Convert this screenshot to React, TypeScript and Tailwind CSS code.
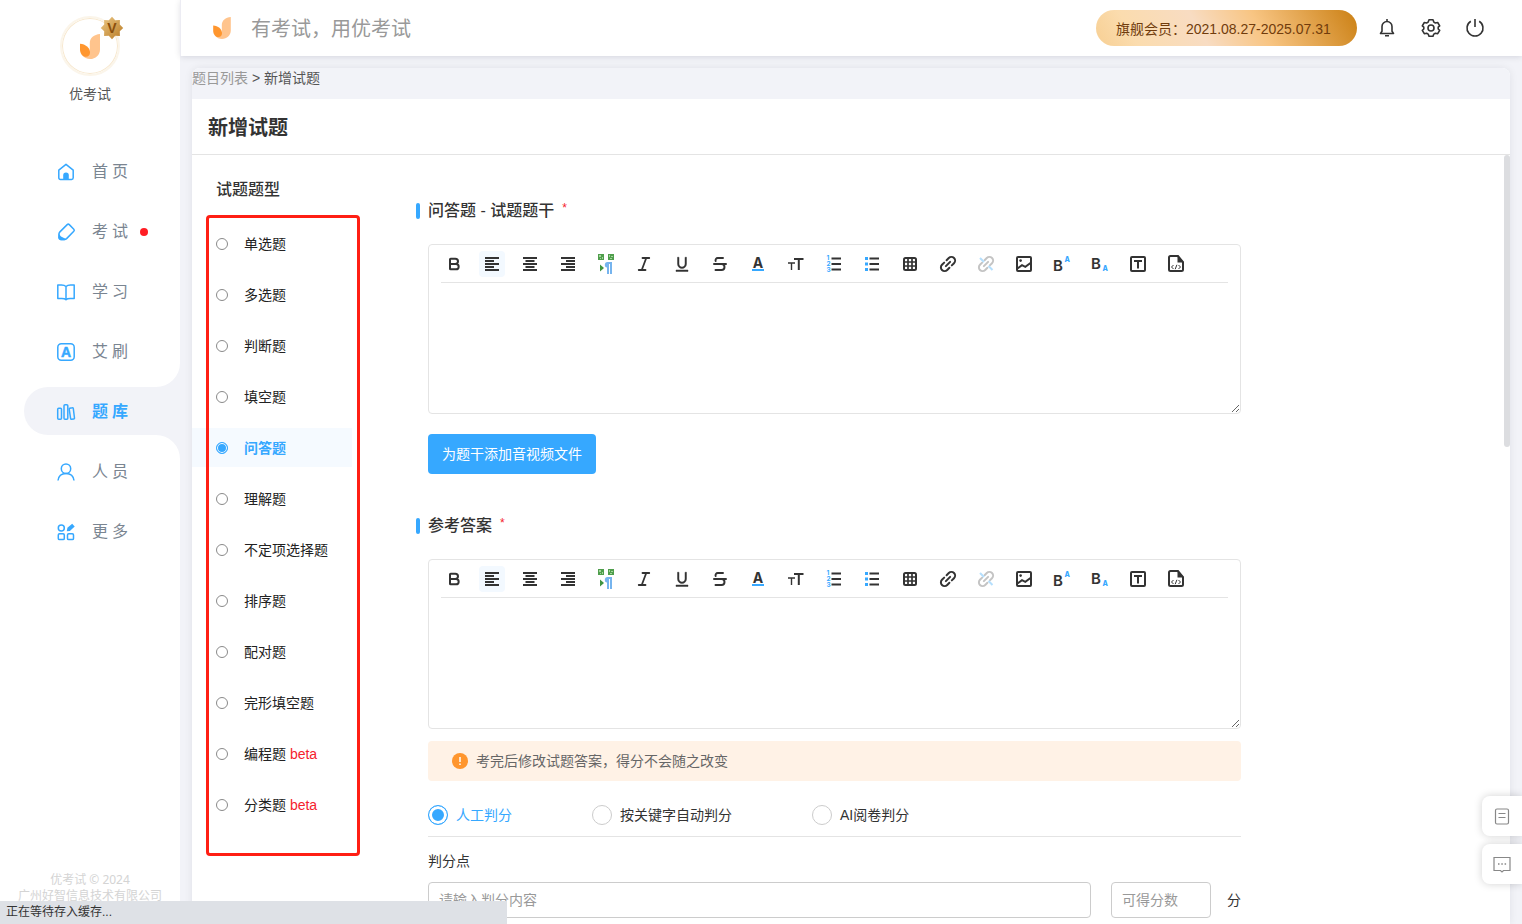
import React from 'react';
import { Bold, Italic, Strikethrough } from 'lucide-react';
import { RiUnderline } from 'react-icons/ri';

const Logo = ({ className }: { className: string }) => (
  <svg viewBox="0 0 20 25" className={className}>
    <path d="M20 0C14 .6 9.800 4 9.800 9v8L2 21c2 2.700 5 4 8 4 5.600 0 10-4.200 10-9.600z" fill="#ffc48d" />
    <path d="M0 9.800c5.500.4 10 3.800 10 8.800 0 2.500-1.500 4.200-4 4.200C2.500 22.800 0 19.500 0 15.500z" fill="#ff962e" />
  </svg>
);

const navItems = [
  {
    label: '首页',
    icon: (
      <>
        <path d="M2.800 8.200 10 2.300l7.200 5.900v7.600a1.600 1.600 0 0 1-1.600 1.600H4.400a1.600 1.600 0 0 1-1.600-1.600z" />
        <path d="M7.200 18v-4.600a2.800 2.800 0 0 1 5.600 0V18z" fill="currentColor" stroke="none" />
      </>
    ),
  },
  {
    label: '考试',
    dot: true,
    icon: (
      <>
        <path d="M11.200 2.600a1.500 1.500 0 0 1 2.100 0l4.500 4.600a1.500 1.500 0 0 1 0 2.100l-7.200 7.300a3 3 0 0 1-2 .8H5a2 2 0 0 1-2-2v-3.500a3 3 0 0 1 .9-2z" />
        <path d="M2.600 11.500 5 14.500l5 2.500-1.400 1.200H4.500L2.300 16z" fill="currentColor" stroke="none" />
      </>
    ),
  },
  {
    label: '学习',
    icon: <path d="M10 4.500C8.800 3.300 7.500 3 5.500 3H1.800v13.500h4c2 0 3.200.2 4.200 1.200 1-1 2.200-1.200 4.200-1.200h4V3h-3.700c-2 0-3.300.3-4.500 1.500zm0 0v13" />,
  },
  {
    label: '艾刷',
    icon: (
      <>
        <rect x="1.800" y="1.800" width="16.400" height="16.400" rx="3.500" />
        <text x="10" y="15" textAnchor="middle" fontSize="14" fontWeight="800" fill="currentColor" strokeWidth="0.500">A</text>
      </>
    ),
  },
  {
    label: '题库',
    active: true,
    icon: (
      <>
        <rect x="1.700" y="6.200" width="3.800" height="11" rx="1" />
        <rect x="8" y="2.700" width="3.800" height="14.500" rx="1" />
        <path d="m13.800 6.300 2.500-.5a.8.8 0 0 1 1 .7l1.200 9.500a.8.8 0 0 1-.7.9l-2.300.3a.8.8 0 0 1-.9-.7l-1.400-9.400a.8.8 0 0 1 .6-.8z" />
      </>
    ),
  },
  {
    label: '人员',
    icon: (
      <>
        <circle cx="10" cy="6.700" r="4.700" />
        <path d="M2 18.500c.5-4.400 3.700-7.100 8-7.100s7.500 2.700 8 7.100" />
      </>
    ),
  },
  {
    label: '更多',
    icon: (
      <>
        <circle cx="5.300" cy="6" r="3" />
        <rect x="2.300" y="11.800" width="6" height="5.800" rx="1.200" />
        <rect x="11.500" y="11.800" width="6" height="5.800" rx="1.200" />
        <path d="m10.800 9.200.6-3.400 4.800-4 2.500 2.800-4.800 4.300z" fill="currentColor" stroke="none" />
      </>
    ),
  },
];

const questionTypes = [
  { label: '单选题' },
  { label: '多选题' },
  { label: '判断题' },
  { label: '填空题' },
  { label: '问答题', active: true },
  { label: '理解题' },
  { label: '不定项选择题' },
  { label: '排序题' },
  { label: '配对题' },
  { label: '完形填空题' },
  { label: '编程题', beta: true },
  { label: '分类题', beta: true },
];

const gradingModes = ['人工判分', '按关键字自动判分', 'AI阅卷判分'];

const Glyph = ({ children }: { children: React.ReactNode }) => (
  <svg viewBox="0 0 20 20" className="size-5 font-['Inter',sans-serif]" fill="none" stroke="currentColor" strokeWidth="2">
    {children}
  </svg>
);

const tools = [
  { name: '加粗', icon: <Bold className="size-4" strokeWidth={3} /> },
  { name: '左对齐', active: true, icon: <Glyph><path d="M3 4h14M3 7h9M3 10h14M3 13h9M3 16h14" strokeWidth="1.800" /></Glyph> },
  { name: '居中', icon: <Glyph><path d="M3 4h14M5.500 7h9M3 10h14M5.500 13h9M3 16h14" strokeWidth="1.800" /></Glyph> },
  { name: '右对齐', icon: <Glyph><path d="M3 4h14M8 7h9M3 10h14M8 13h9M3 16h14" strokeWidth="1.800" /></Glyph> },
  {
    name: '段落方向',
    icon: (
      <Glyph>
        <g stroke="none">
          <path d="M2 0h6v6H2zM12 0h6v6h-6z" fill="#4f9e4c" />
          <path d="M3 1h2v2H3zM6 3h1v2H6zM13 1h1v2h-1zM15 2h2v1h-2zM4 4h1v1H4zM14 4h2v1h-2z" fill="#a3d49b" />
          <path d="m4 10.500 4 3.500-4 3.500z" fill="#3f9440" />
          <path d="M11.500 8H16v12h-2V10h-1v10h-2v-6.500c-3 0-3-5.500.5-5.500z" fill="#76b4ee" />
        </g>
      </Glyph>
    ),
  },
  { name: '斜体', icon: <Italic className="size-[18px]" strokeWidth={2.4} /> },
  { name: '下划线', icon: <RiUnderline className="size-[18px] stroke-[0.6] stroke-current" /> },
  { name: '删除线', icon: <Strikethrough className="size-[18px]" strokeWidth={2.6} /> },
  {
    name: '文字颜色',
    icon: (
      <Glyph>
        <text x="10" y="13.500" textAnchor="middle" fontSize="14" fontWeight="700" fill="currentColor" stroke="none">A</text>
        <path d="M4 16h12" stroke="#36a8ff" />
      </Glyph>
    ),
  },
  { name: '字号', icon: <Glyph><path d="M8 5h9.500M12.800 5v11" /><path d="M2 9h7M5.500 9v7" strokeWidth="1.400" /></Glyph> },
  {
    name: '有序列表',
    icon: (
      <Glyph>
        <path d="M7.500 4.500H17M7.500 10H17M7.500 15.500H17" />
        <g fill="#36a8ff" stroke="none" fontSize="6.500" fontWeight="700">
          <text x="2.500" y="6">1</text>
          <text x="2.500" y="12">2</text>
          <text x="2.500" y="18">3</text>
        </g>
      </Glyph>
    ),
  },
  {
    name: '无序列表',
    icon: (
      <Glyph>
        <path d="M7.500 4.500H17M7.500 10H17M7.500 15.500H17" />
        <path d="M3 3h3v3H3zM3 8.500h3v3H3zM3 14h3v3H3z" fill="#36a8ff" stroke="none" />
      </Glyph>
    ),
  },
  { name: '表格', icon: <Glyph><rect x="4" y="4" width="12" height="12" rx="1.500" /><path d="M3 8h14M3 12h14M8 3v14M12 3v14" strokeWidth="1.700" /></Glyph> },
  {
    name: '链接',
    icon: (
      <Glyph>
        <g transform="rotate(-45 10 10)" strokeLinecap="round">
          <path d="M8.300 13.700H5.200a3.700 3.700 0 0 1 0-7.400h3.100M11.700 6.300h3.100a3.700 3.700 0 0 1 0 7.400h-3.100M7 10h6" />
        </g>
      </Glyph>
    ),
  },
  {
    name: '取消链接',
    icon: (
      <Glyph>
        <g transform="rotate(-45 10 10)" stroke="#c4c4c4" strokeLinecap="round">
          <path d="M8.300 13.700H5.200a3.700 3.700 0 0 1 0-7.400h3.100M11.700 6.300h3.100a3.700 3.700 0 0 1 0 7.400h-3.100M7 10h6" />
        </g>
        <path d="m4 4 4 4M12.500 12l4 4" stroke="#b5dffd" />
      </Glyph>
    ),
  },
  {
    name: '图片',
    icon: (
      <Glyph>
        <rect x="3" y="3" width="14" height="14" rx="1" />
        <path d="m3.500 14.500 4.500-3.300 3.300 1.600 5.200-3.800" />
        <circle cx="6.600" cy="6.600" r="1.300" fill="currentColor" stroke="none" />
      </Glyph>
    ),
  },
  {
    name: '上标',
    icon: (
      <Glyph>
        <text x="1" y="16.500" fontSize="15" fontWeight="600" fill="currentColor" stroke="none">B</text>
        <text x="12.500" y="8" fontSize="7" fontWeight="800" fill="#36a8ff" stroke="none">A</text>
      </Glyph>
    ),
  },
  {
    name: '下标',
    icon: (
      <Glyph>
        <text x="1" y="14.500" fontSize="15" fontWeight="600" fill="currentColor" stroke="none">B</text>
        <text x="12.500" y="17" fontSize="7" fontWeight="800" fill="#36a8ff" stroke="none">A</text>
      </Glyph>
    ),
  },
  { name: '文本框', icon: <Glyph><rect x="3" y="3" width="14" height="14" rx="1" /><path d="M6 7h8M10 7v7.500" /></Glyph> },
  {
    name: '源代码',
    icon: (
      <Glyph>
        <path d="M12 2H4.500A1.500 1.500 0 0 0 3 3.500v12.100a1.500 1.500 0 0 0 1.500 1.500h11a1.500 1.500 0 0 0 1.500-1.500V8z" />
        <path d="M11.500 1.500 18 8.500h-6.500z" fill="currentColor" stroke="none" />
        <path d="m7.500 11-2 2 2 2M12.500 11l2 2-2 2M10.900 10.800l-1.700 4.400" strokeWidth="1" />
      </Glyph>
    ),
  },
];

const SectionTitle = ({ children }: { children: string }) => (
  <h2 className="flex items-center gap-2 text-base leading-6 font-medium text-[#333]">
    <span className="h-4 w-1 rounded-xs bg-[#36a8ff]" />
    <span className="pt-px">{children}</span>
    <span className="self-start text-xs leading-5 font-normal text-[#f5222d]">*</span>
  </h2>
);

const Editor = ({ label }: { label: string }) => (
  <div className="rounded border border-[#e4e4e4]">
    <div className="mx-3 flex h-[38px] items-center gap-3 border-b border-[#e4e4e4]">
      {tools.map((tool) => (
        <button
          key={tool.name}
          type="button"
          aria-label={tool.name}
          className={`flex size-[26px] shrink-0 items-center justify-center rounded-sm text-[#333] ${tool.active ? 'bg-[#f3f9ff]' : ''}`}
        >
          {tool.icon}
        </button>
      ))}
    </div>
    <textarea aria-label={label} className="block h-[130px] w-full resize-y px-3 py-2 text-sm outline-none" />
  </div>
);

const Sidebar = () => (
  <aside className="relative flex w-[180px] shrink-0 flex-col overflow-hidden bg-white">
    <div className="flex flex-col items-center pt-4">
      <div className="relative flex size-[60px] items-center justify-center rounded-full border-2 border-[#fbf5ea] inset-ring inset-ring-[#f7e8cf]">
        <Logo className="h-[25px] w-5" />
        <svg viewBox="0 0 24 24" className="absolute -top-0.5 -right-1.5 size-6">
          <defs>
            <linearGradient id="medal" x1="0" y1="0" x2="1" y2="1">
              <stop offset="0" stopColor="#ecc987" />
              <stop offset="1" stopColor="#b97a23" />
            </linearGradient>
          </defs>
          <path d="m12 .8 3.200 3.400 4.700-.2-.1 4.600 3.400 3.400-3.400 3.300.1 4.700-4.700-.2L12 23.200l-3.200-3.400-4.700.2.1-4.700L.8 12l3.400-3.400-.1-4.600 4.700.2z" fill="url(#medal)" />
          <text x="12" y="17" textAnchor="middle" fontSize="14" fontWeight="800" fill="#8a4f0c">V</text>
        </svg>
      </div>
      <p className="mt-2 text-sm leading-5 text-[#555]">优考试</p>
    </div>

    <nav className="mt-[43px] flex flex-col gap-3 pl-6">
      {navItems.map((item) => (
        <a
          key={item.label}
          href="#"
          className={`relative flex h-12 items-center rounded-l-full pt-0.5 pl-8 text-base ${item.active ? 'bg-[#f2f3f8] font-bold text-[#36a8ff]' : 'text-[#7a8591]'}`}
        >
          {item.active && (
            <>
              <span className="absolute right-0 bottom-full size-6 bg-[#f2f3f8]">
                <span className="block size-full rounded-br-full bg-white" />
              </span>
              <span className="absolute top-full right-0 size-6 bg-[#f2f3f8]">
                <span className="block size-full rounded-tr-full bg-white" />
              </span>
            </>
          )}
          <svg viewBox="0 0 20 20" className="mr-4 size-5 text-[#36a8ff]" fill="none" stroke="currentColor" strokeWidth="1.500" strokeLinejoin="round">
            {item.icon}
          </svg>
          <span className="tracking-[4px]">{item.label}</span>
          {item.dot && <span className="ml-2 size-2 rounded-full bg-[#ff1d24]" />}
        </a>
      ))}
    </nav>

    <footer className="mt-auto pb-5 text-center font-['Noto_Sans','Noto_Sans_CJK_SC',sans-serif] text-xs leading-4 text-[#d4d4d4]">
      <p>优考试 © 2024</p>
      <p>广州好智信息技术有限公司</p>
    </footer>
  </aside>
);

const Header = () => (
  <header className="relative flex h-14 shrink-0 items-center border-l border-[#ececf3] bg-white pr-[37px] pl-8 shadow-[0_1px_6px_rgba(0,0,40,0.12)]">
    <Logo className="h-[22px] w-[18px]" />
    <p className="ml-5 pt-0.5 text-xl text-[#999]">有考试，用优考试</p>
    <div className="ml-auto flex h-9 w-[261px] items-center rounded-full bg-[linear-gradient(60deg,#f7cf93_0%,#fbdcae_15%,#f8dcc2_40%,#f8c583_62%,#cb8014_100%)] px-5 pt-px text-sm whitespace-nowrap text-[#713c0c]">
      旗舰会员：2021.08.27-2025.07.31
    </div>
    <div className="ml-5 flex gap-6 text-[#333]">
      <button type="button" aria-label="通知">
        <svg viewBox="0 0 20 20" className="size-5" fill="none" stroke="currentColor" strokeWidth="1.600" strokeLinejoin="round">
          <path d="M3.500 15.500h13L15 13.300V8.500a5 5 0 0 0-10 0v4.800zM10 1v2.500M8 17.700h4" />
        </svg>
      </button>
      <button type="button" aria-label="设置">
        <svg viewBox="0 0 20 20" className="size-5" fill="none" stroke="currentColor" strokeWidth="1.600" strokeLinejoin="round">
          <path d="M8 1.800h4l.8 2.300 1.600.9 2.300-.5 2 3.400-1.500 1.300v1.800l1.500 1.300-2 3.400-2.300-.5-1.600.9-.8 2.200H8l-.8-2.200-1.600-.9-2.300.5-2-3.400L2.800 11V9.200L1.300 7.900l2-3.400 2.300.5 1.600-.9z" />
          <circle cx="10" cy="10" r="3" />
        </svg>
      </button>
      <button type="button" aria-label="退出">
        <svg viewBox="0 0 20 20" className="size-5" fill="none" stroke="currentColor" strokeWidth="1.600">
          <path d="M10 1v8M5.800 3.200a8 8 0 1 0 8.400 0" />
        </svg>
      </button>
    </div>
  </header>
);

const TypeList = () => (
  <fieldset className="w-40 shrink-0 pt-[25px]">
    <h2 className="pl-6 text-base leading-5 font-medium text-[#333]">试题题型</h2>
    <div className="relative mt-6 flex flex-col gap-3">
      {questionTypes.map((type) => (
        <label
          key={type.label}
          className={`flex h-[39px] items-center gap-4 pl-6 text-sm whitespace-nowrap ${type.active ? 'bg-[#f5faff] font-bold text-[#36a8ff]' : 'text-[#222]'}`}
        >
          <input
            type="radio"
            name="type"
            defaultChecked={type.active}
            className="size-3 appearance-none rounded-full border border-[#8a8a8a] bg-white checked:border-[#36a8ff] checked:bg-[#36a8ff] checked:inset-ring checked:inset-ring-white"
          />
          <span>
            {type.label}
            {type.beta && <span className="text-[#f5222d]"> beta</span>}
          </span>
        </label>
      ))}
      {/* red callout frame over the list */}
      <div className="pointer-events-none absolute -top-[9px] -bottom-8 left-[14px] w-[154px] rounded-sm border-3 border-[#ff1f14]" />
    </div>
  </fieldset>
);

const QuestionForm = () => (
  <form className="ml-16 max-w-[825px] min-w-0 flex-1 pt-[43px]">
    <SectionTitle>问答题 - 试题题干</SectionTitle>
    <div className="mt-[21px] pl-3">
      <Editor label="试题题干" />
      <button type="button" className="mt-5 h-10 rounded bg-[#36a8ff] px-[14px] text-sm text-white">
        为题干添加音视频文件
      </button>
    </div>

    <div className="mt-[39px]">
      <SectionTitle>参考答案</SectionTitle>
    </div>
    <div className="mt-[21px] pl-3">
      <Editor label="参考答案" />
      <div className="mt-3 flex h-10 items-center gap-2 rounded bg-[#fff2e6] pl-6 text-sm text-[#666]">
        <svg viewBox="0 0 16 16" className="size-4">
          <circle cx="8" cy="8" r="8" fill="#ff962e" />
          <path d="M8 4v5M8 10.500v1.500" stroke="#fff" strokeWidth="1.500" />
        </svg>
        考完后修改试题答案，得分不会随之改变
      </div>

      <div className="mt-6 flex gap-20 border-b border-[#e4e4e4] pb-[11px]">
        {gradingModes.map((mode, i) => (
          <label key={mode} className="flex items-center gap-2 text-sm leading-5 text-[#333] has-checked:text-[#36a8ff]">
            <input
              type="radio"
              name="grading"
              defaultChecked={i === 0}
              className="size-5 appearance-none rounded-full border border-[#ccc] bg-white checked:border-[#36a8ff] checked:bg-[#36a8ff] checked:inset-ring-3 checked:inset-ring-white"
            />
            {mode}
          </label>
        ))}
      </div>

      <p className="mt-[14px] text-sm leading-5 text-[#333]">判分点</p>
      <div className="mt-[11px] flex items-center text-sm text-[#333]">
        <input aria-label="判分内容" placeholder="请输入判分内容" className="h-9 min-w-0 flex-1 rounded border border-[#ccc] px-[10px] placeholder:text-[#999]" />
        <input aria-label="可得分数" placeholder="可得分数" className="ml-5 h-9 w-[100px] rounded border border-[#ccc] px-[10px] placeholder:text-[#999]" />
        <span className="ml-4">分</span>
      </div>
    </div>
  </form>
);

export default function App() {
  return (
    <div className="flex h-screen overflow-hidden bg-[#f2f3f8] font-['Liberation_Sans','Noto_Sans_CJK_SC',sans-serif]">
      <Sidebar />
      <div className="flex min-w-0 flex-1 flex-col">
        <Header />
        <main className="relative mx-3 mt-3 flex min-h-0 flex-1 flex-col overflow-hidden rounded-t-lg bg-white shadow-[0_0_8px_rgba(0,0,40,0.08)]">
          <div className="bg-[#f2f3f8] pb-[11px] text-sm leading-5 text-[#555]">
            <a href="#" className="text-[#999]">题目列表</a> &gt; 新增试题
          </div>
          <h1 className="flex h-14 shrink-0 items-center border-b border-[#e4e4e4] px-4 pt-0.5 text-xl font-bold text-[#333]">新增试题</h1>
          <div className="relative flex min-h-0 flex-1 overflow-hidden">
            <TypeList />
            <QuestionForm />
            <div className="absolute top-0 right-0 h-[38%] w-1.5 rounded-full bg-[#dcdde0]" />
          </div>
        </main>
      </div>

      <div className="fixed right-0 bottom-10 flex flex-col gap-2 text-[#888]">
        <button type="button" aria-label="文档" className="flex size-10 items-center justify-center rounded-l-lg bg-white shadow-[0_0_8px_rgba(0,0,0,0.18)]">
          <svg viewBox="0 0 20 20" className="size-5" fill="none" stroke="currentColor" strokeWidth="1.200">
            <rect x="3.500" y="3" width="13" height="15" rx="1.500" />
            <path d="M6.500 7.500h7M6.500 11.500h7" />
          </svg>
        </button>
        <button type="button" aria-label="反馈" className="flex size-10 items-center justify-center rounded-l-lg bg-white shadow-[0_0_8px_rgba(0,0,0,0.18)]">
          <svg viewBox="0 0 20 20" className="size-5" fill="none" stroke="currentColor" strokeWidth="1.200">
            <path d="M2 3.500h16v13h-6.500L10 18l-1.500-1.500H2z" />
            <path d="M6 10h1.500M9.300 10h1.500M12.600 10h1.500" strokeWidth="1.500" />
          </svg>
        </button>
      </div>

      <div className="fixed bottom-0 left-0 h-[23px] w-1/3 bg-[#dee1e6] px-[6px] text-xs leading-[23px] text-[#333]">正在等待存入缓存...</div>
    </div>
  );
}
